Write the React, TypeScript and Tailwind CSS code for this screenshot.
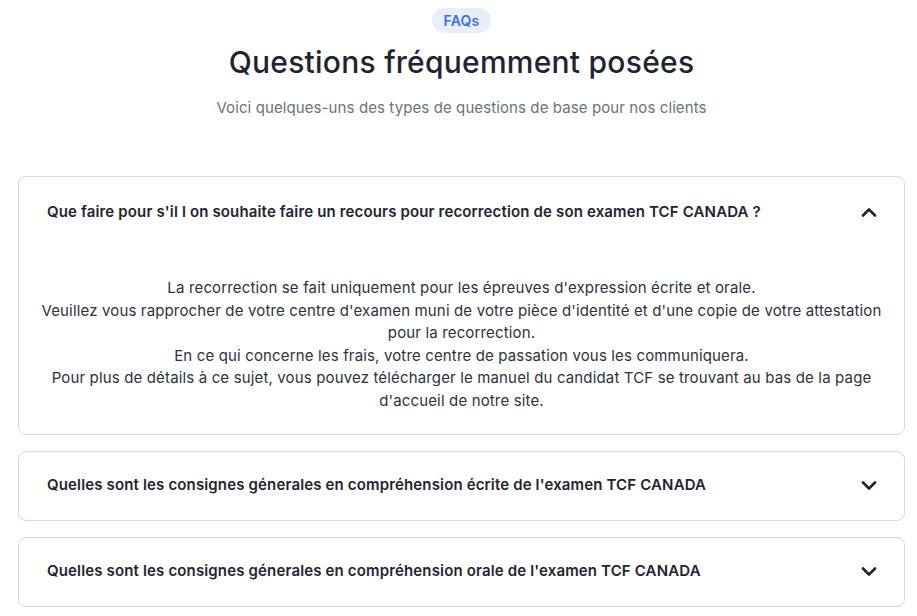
import React from "react";

const Chevron = ({ up }: { up?: boolean }) => (
  <svg width="16" height="10" viewBox="0 0 16 10" fill="none" stroke="#1f2433" strokeWidth="2.6" strokeLinecap="round" strokeLinejoin="round">
    {up ? <path d="M2 8.5L8 2.5l6 6" /> : <path d="M2 1.5l6 6 6-6" />}
  </svg>
);

export default function App() {
  const font = { fontFamily: "Inter, 'Noto Sans', sans-serif" };
  return (
    <div className="min-h-screen bg-white" style={font}>
      <div className="ml-[18px] mr-[12px]">
        <div className="flex flex-col items-center pt-[8px]">
          <span className="rounded-full bg-[#e8eefd] px-[12px] h-[25px] flex items-center text-[14px] font-semibold tracking-[0.2px] text-[#3b6ef0]">FAQs</span>
          <h1 className="mt-[11px] text-[30px] leading-[36px] font-medium tracking-[0.25px] text-[#1f2433]">Questions fréquemment posées</h1>
          <p className="mt-[18px] text-[15px] leading-[20px] tracking-[0.1px] text-[#6b7280]">Voici quelques-uns des types de questions de base pour nos clients</p>
        </div>
        <div className="mt-[58px] flex flex-col gap-[16px]">
          <div className="rounded-[8px] border border-[#d6d8de]">
            <div className="flex items-center justify-between pl-[28px] pr-[27px] h-[70px]">
              <span className="text-[15px] font-semibold tracking-[0.15px] text-[#1f2433]">Que faire pour s'il l on souhaite faire un recours pour recorrection de son examen TCF CANADA ?</span>
              <Chevron up />
            </div>
            <div className="px-[20px] pt-[30px] pb-[21px] text-center text-[15px] leading-[22.6px] tracking-[0.15px] text-[#2d3240]">
              La recorrection se fait uniquement pour les épreuves d'expression écrite et orale.<br />
              Veuillez vous rapprocher de votre centre d'examen muni de votre pièce d'identité et d'une copie de votre attestation pour la recorrection.<br />
              En ce qui concerne les frais, votre centre de passation vous les communiquera.<br />
              Pour plus de détails à ce sujet, vous pouvez télécharger le manuel du candidat TCF se trouvant au bas de la page d'accueil de notre site.
            </div>
          </div>
          <div className="rounded-[8px] border border-[#d6d8de]">
            <div className="flex items-center justify-between pl-[28px] pr-[27px] h-[68px]">
              <span className="text-[15px] font-semibold tracking-[0.15px] text-[#1f2433]">Quelles sont les consignes génerales en compréhension écrite de l'examen TCF CANADA</span>
              <Chevron />
            </div>
          </div>
          <div className="rounded-[8px] border border-[#d6d8de]">
            <div className="flex items-center justify-between pl-[28px] pr-[27px] h-[68px]">
              <span className="text-[15px] font-semibold tracking-[0.15px] text-[#1f2433]">Quelles sont les consignes génerales en compréhension orale de l'examen TCF CANADA</span>
              <Chevron />
            </div>
          </div>
        </div>
      </div>
    </div>
  );
}
